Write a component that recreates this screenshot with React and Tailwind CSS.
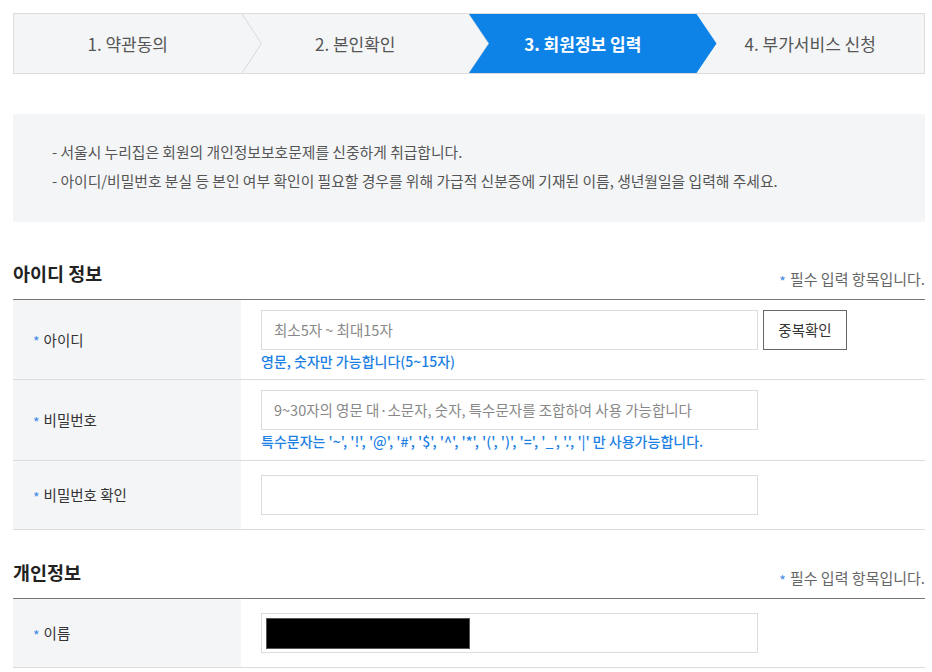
import React from "react";

const FONT = { fontFamily: '"Noto Sans CJK KR", "Noto Sans", sans-serif' };

function Chevron() {
  return (
    <svg className="absolute top-0 left-full h-full w-[20px] z-10" viewBox="0 0 20 59" preserveAspectRatio="none">
      <polyline points="0,0 19.5,29.5 0,59" fill="none" stroke="#d9d9d9" strokeWidth="1" />
    </svg>
  );
}

function Stepper() {
  return (
    <div className="flex h-[61px] border border-[#dcdcdc] bg-[#f4f5f7]">
      <div className="relative flex flex-1 items-center justify-center text-[17px] text-[#555]">
        <span>1. 약관동의</span>
        <Chevron />
      </div>
      <div className="relative flex flex-1 items-center justify-center text-[17px] text-[#555]">
        <span>2. 본인확인</span>
        <Chevron />
      </div>
      <div className="relative flex flex-1 items-center justify-center text-[17px] font-bold text-white">
        <svg className="absolute left-0 top-0 h-full w-[calc(100%+20px)] z-20" viewBox="0 0 248 59" preserveAspectRatio="none">
          <polygon points="0,0 228,0 248,29.5 228,59 0,59 20,29.5" fill="#0d83e8" />
        </svg>
        <span className="relative z-30">3. 회원정보 입력</span>
      </div>
      <div className="relative flex flex-1 items-center justify-center text-[17px] text-[#555]">
        <span>4. 부가서비스 신청</span>
      </div>
    </div>
  );
}

function Star() {
  return <span className="relative top-[2px] mr-[4px] text-[14px] text-[#3f8ae6]">*</span>;
}

function SectionHead({ title, mt }) {
  return (
    <div className={`flex items-end justify-between pb-[13px] ${mt}`}>
      <h2 className="text-[18.5px] font-bold leading-[26px] text-[#222]">{title}</h2>
      <p className="mb-[-3px] text-[15px] leading-[20px] text-[#666]">
        <Star />필수 입력 항목입니다.
      </p>
    </div>
  );
}

function Row({ label, children, pad }) {
  return (
    <div className="flex border-b border-[#dcdcdc]">
      <div className="flex w-[228px] shrink-0 items-center bg-[#f4f5f7] pl-[20px] text-[14.5px] text-[#333]">
        <Star />
        {label}
      </div>
      <div className={`flex-1 pl-[20px] ${pad}`}>{children}</div>
    </div>
  );
}

function Input({ placeholder }) {
  return (
    <div className="flex h-[40px] w-[497px] items-center border border-[#dcdcdc] bg-white px-[12px] text-[14.5px] text-[#888]">
      {placeholder}
    </div>
  );
}

function Help({ children }) {
  return <p className="mt-[2px] text-[14px] font-medium leading-[18px] text-[#1b7fe3]">{children}</p>;
}

export default function App() {
  return (
    <div className="min-h-[672px] bg-white pl-[13px] pr-[7px] pt-[13px]" style={FONT}>
      <Stepper />

      <div className="mt-[40px] bg-[#f4f5f7] px-[39px] pt-[23px] pb-[27px] text-[14.8px] leading-[29px] text-[#555]">
        <p>- 서울시 누리집은 회원의 개인정보보호문제를 신중하게 취급합니다.</p>
        <p>- 아이디/비밀번호 분실 등 본인 여부 확인이 필요할 경우를 위해 가급적 신분증에 기재된 이름, 생년월일을 입력해 주세요.</p>
      </div>

      <SectionHead title="아이디 정보" mt="mt-[38px]" />
      <div className="border-t border-[#777]">
        <Row label="아이디" pad="pt-[10px] pb-[9px]">
          <div className="flex gap-[5px]">
            <Input placeholder="최소5자 ~ 최대15자" />
            <button className="h-[40px] w-[84px] border border-[#666] bg-white text-[14.5px] text-[#333]">중복확인</button>
          </div>
          <Help>영문, 숫자만 가능합니다(5~15자)</Help>
        </Row>
        <Row label="비밀번호" pad="pt-[10px] pb-[10px]">
          <Input placeholder="9~30자의 영문 대·소문자, 숫자, 특수문자를 조합하여 사용 가능합니다" />
          <Help>특수문자는 '~', '!', '@', '#', '$', '^', '*', '(', ')', '=', '_', '.', '|' 만 사용가능합니다.</Help>
        </Row>
        <Row label="비밀번호 확인" pad="py-[14px]">
          <Input />
        </Row>
      </div>

      <SectionHead title="개인정보" mt="mt-[29px]" />
      <div className="border-t border-[#777]">
        <Row label="이름" pad="py-[14px]">
          <div className="flex h-[40px] w-[497px] items-center border border-[#dcdcdc] bg-white pl-[4px]">
            <div className="h-[31px] w-[204px] border border-[#555] bg-black" />
          </div>
        </Row>
      </div>
    </div>
  );
}
